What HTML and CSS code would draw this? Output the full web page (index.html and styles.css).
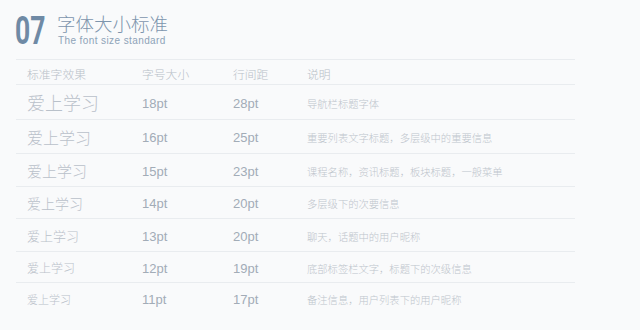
FILE: index.html
```html
<!DOCTYPE html>
<html lang="zh">
<head>
<meta charset="utf-8">
<title>字体大小标准</title>
<link rel="stylesheet" href="styles.css">
</head>
<body>
<div class="page">
  <header class="title-row">
    <div class="num">07</div>
    <div class="titles">
      <h1 class="title-cn">字体大小标准</h1>
      <p class="title-en">The font size standard</p>
    </div>
  </header>
  <div class="table">
    <div class="row head">
      <span>标准字效果</span><span>字号大小</span><span>行间距</span><span>说明</span>
    </div>
    <div class="row r1">
      <span class="sample s18">爱上学习</span><span class="pt">18pt</span><span class="pt">28pt</span><span class="desc">导航栏标题字体</span>
    </div>
    <div class="row r2">
      <span class="sample s16">爱上学习</span><span class="pt">16pt</span><span class="pt">25pt</span><span class="desc">重要列表文字标题，多层级中的重要信息</span>
    </div>
    <div class="row r3">
      <span class="sample s15">爱上学习</span><span class="pt">15pt</span><span class="pt">23pt</span><span class="desc">课程名称，资讯标题，板块标题，一般菜单</span>
    </div>
    <div class="row r4">
      <span class="sample s14">爱上学习</span><span class="pt">14pt</span><span class="pt">20pt</span><span class="desc">多层级下的次要信息</span>
    </div>
    <div class="row r5">
      <span class="sample s13">爱上学习</span><span class="pt">13pt</span><span class="pt">20pt</span><span class="desc">聊天，话题中的用户昵称</span>
    </div>
    <div class="row r6">
      <span class="sample s12">爱上学习</span><span class="pt">12pt</span><span class="pt">19pt</span><span class="desc">底部标签栏文字，标题下的次级信息</span>
    </div>
    <div class="row r7">
      <span class="sample s11">爱上学习</span><span class="pt">11pt</span><span class="pt">17pt</span><span class="desc">备注信息，用户列表下的用户昵称</span>
    </div>
  </div>
</div>
</body>
</html>
```
FILE: styles.css
```css
html, body {
  margin: 0;
  padding: 0;
  background: #f9fafb;
}
body {
  width: 640px;
  height: 330px;
  overflow: hidden;
  font-family: "Liberation Sans", "Noto Sans CJK SC", sans-serif;
}
.page {
  padding: 12px 0 0 15px;
}
.title-row {
  display: flex;
  align-items: flex-start;
  height: 39px;
}
.num {
  font-family: Roboto, "Liberation Sans", sans-serif;
  font-weight: 700;
  font-size: 39px;
  line-height: 39px;
  color: #6f8aa5;
  width: 30px;
  transform: scaleX(0.68);
  transform-origin: left center;
}
.titles {
  margin-left: 12px;
}
.title-cn {
  margin: 1px 0 0 0;
  font-family: "Noto Sans CJK SC", sans-serif;
  font-weight: 300;
  font-size: 18.5px;
  line-height: 20px;
  color: #7d95ad;
}
.title-en {
  margin: 2px 0 0 1px;
  font-family: "Liberation Sans", sans-serif;
  font-size: 10px;
  line-height: 11px;
  letter-spacing: 0.4px;
  color: #8ea3b8;
}
.table {
  margin: 8px 0 0 1px;
  width: 559px;
}
.row {
  display: grid;
  grid-template-columns: 115px 91px 74px 1fr;
  align-items: center;
  box-sizing: border-box;
  border-top: 1px solid #e9ecef;
  padding-left: 11px;
  padding-top: 2px;
}
.head { height: 25px; font-family: "Noto Sans CJK SC", sans-serif; font-weight: 300; font-size: 11.8px; color: #b8c0c8; }
.r1 { height: 35px; }
.r2 { height: 34px; }
.r3 { height: 33px; }
.r4 { height: 32px; }
.r5 { height: 33px; }
.r6 { height: 31px; }
.r7 { height: 32px; }
.sample {
  font-family: "Noto Sans CJK SC", sans-serif;
  font-weight: 300;
  color: #b9c1ca;
  line-height: 1.2;
}
.s18 { font-size: 18px; }
.s16 { font-size: 16px; }
.s15 { font-size: 15px; }
.s14 { font-size: 14px; }
.s13 { font-size: 13px; }
.s12 { font-size: 12px; }
.s11 { font-size: 11px; }
.pt {
  font-family: "Liberation Sans", sans-serif;
  font-size: 13px;
  color: #a2acb7;
}
.desc {
  font-family: "Noto Sans CJK SC", sans-serif;
  font-weight: 300;
  font-size: 10.3px;
  color: #bec5cc;
}
```
